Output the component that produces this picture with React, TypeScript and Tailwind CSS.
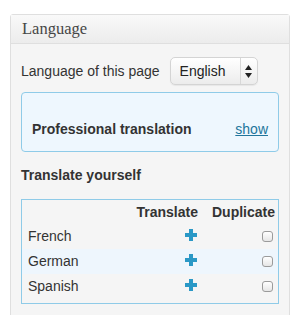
const languages: string[] = ["French", "German", "Spanish"];

function Plus() {
  return (
    <svg width="12" height="12" viewBox="0 0 12 12">
      <rect x="4" y="0" width="4" height="12" fill="#2a98c6" />
      <rect x="0" y="4" width="12" height="4" fill="#2a98c6" />
    </svg>
  );
}

function Checkbox() {
  return (
    <div className="w-[11px] h-[11px] rounded-[3px] border border-[#9b9b9b] bg-gradient-to-b from-white to-[#e6e6e6]" />
  );
}

export default function App() {
  return (
    <div className="min-h-[315px] bg-white pt-[14px] pl-[10px] font-['Liberation_Sans',Arial,sans-serif] text-[14px] text-[#333]">
      <div className="w-[280px] border border-[#dfdfdf] rounded-t-[3px] bg-[#f5f5f5]">
        {/* Header */}
        <div className="h-[29px] border-b border-[#dfdfdf] bg-gradient-to-b from-[#f9f9f9] to-[#ececec] pl-[11px] flex items-center">
          <h3 className="font-['Liberation_Serif',Georgia,serif] text-[16.5px] text-[#464646] leading-none">
            Language
          </h3>
        </div>

        {/* Body */}
        <div className="px-[10px] pt-[13px] pb-[24px]">
          <div className="flex items-center gap-[10px]">
            <span>Language of this page</span>
            <div className="w-[88px] h-[28px] rounded-[5px] border border-[#d4d4d4] bg-gradient-to-b from-white to-[#ececec] flex items-center shadow-[0_1px_1px_rgba(0,0,0,0.06)]">
              <span className="flex-1 pl-[9px] text-[#222]">English</span>
              <div className="w-[17px] h-full border-l border-[#d8d8d8] flex items-center justify-center">
                <svg width="7" height="13" viewBox="0 0 7 13">
                  <path d="M3.5 0 L7 5 L0 5 Z" fill="#222" />
                  <path d="M0 8 L7 8 L3.5 13 Z" fill="#222" />
                </svg>
              </div>
            </div>
          </div>

          {/* Professional translation */}
          <div className="mt-[7px] h-[60px] rounded-[4px] border border-[#8fcbe8] bg-[#eef7fe] px-[10px] pb-[11px] flex items-end justify-between">
            <span className="font-bold">Professional translation</span>
            <a href="#" className="text-[#21759b] underline">
              show
            </a>
          </div>

          <h4 className="mt-[13px] font-bold">Translate yourself</h4>

          {/* Table */}
          <div className="mt-[13px] border border-[#8fcbe8] pb-[4px]">
            <div className="flex items-center h-[24px] pr-[3px] font-bold">
              <span className="flex-1" />
              <span className="w-[63px] text-right">Translate</span>
              <span className="w-[64px] ml-[13px] text-right">Duplicate</span>
            </div>
            {languages.map((lang: string, i: number) => (
              <div
                key={lang}
                className={
                  i === 1
                    ? "flex items-center h-[25px] pr-[3px] bg-[#eef6fd]"
                    : "flex items-center h-[25px] pr-[3px]"
                }
              >
                <span className="flex-1 pl-[6px]">{lang}</span>
                <span className="w-[63px] flex justify-end pr-[1px] -mt-[3px]">
                  <Plus />
                </span>
                <span className="w-[64px] ml-[13px] flex justify-end pr-[2px]">
                  <Checkbox />
                </span>
              </div>
            ))}
          </div>
        </div>
      </div>
    </div>
  );
}
